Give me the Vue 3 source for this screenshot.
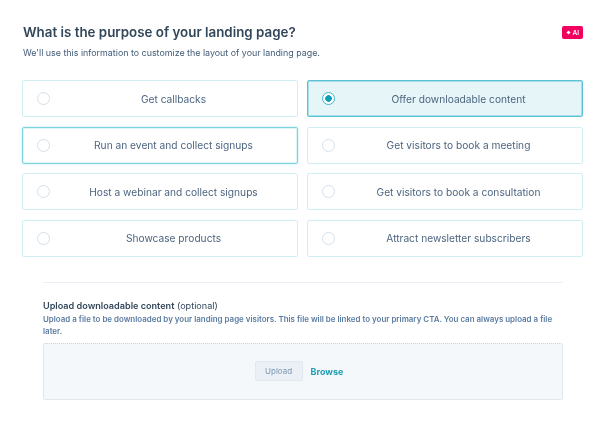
<template>
  <div class="page">
    <div class="header">
      <h1 class="title">What is the purpose of your landing page?</h1>
      <span class="ai-badge"><i class="spark" />AI</span>
    </div>
    <p class="subtitle">We'll use this information to customize the layout of your landing page.</p>

    <div class="options">
      <div
        v-for="opt in options"
        :key="opt.label"
        class="option"
        :class="{ selected: opt.label === selected, hovered: opt.hovered }"
      >
        <span class="radio" />
        <span class="option-label">{{ opt.label }}</span>
      </div>
    </div>

    <div class="upload-section">
      <div class="upload-title"><b>Upload downloadable content</b> (optional)</div>
      <p class="upload-help">
        Upload a file to be downloaded by your landing page visitors. This file will be linked to your primary CTA. You can always upload a file later.
      </p>
      <div class="dropzone">
        <button class="upload-btn">Upload</button>
        <a class="browse">Browse</a>
      </div>
    </div>
  </div>
</template>

<script setup>
const selected = 'Offer downloadable content'

const options = [
  { label: 'Get callbacks' },
  { label: 'Offer downloadable content' },
  { label: 'Run an event and collect signups', hovered: true },
  { label: 'Get visitors to book a meeting' },
  { label: 'Host a webinar and collect signups' },
  { label: 'Get visitors to book a consultation' },
  { label: 'Showcase products' },
  { label: 'Attract newsletter subscribers' }
]
</script>

<style>
html, body {
  background: #fff;
}
</style>

<style scoped>
.page {
  width: 605px;
  height: 428px;
  box-sizing: border-box;
  padding: 23px 22px 0;
  font-family: Inter, "Noto Sans", sans-serif;
  color: #33475b;
  overflow: hidden;
  /* the reference is a slightly soft, upscaled capture */
  filter: blur(0.35px);
}

.header {
  display: flex;
  justify-content: space-between;
  align-items: center;
  padding-left: 1px;
}

.title {
  margin: 0;
  font-size: 13.35px;
  line-height: 18px;
  font-weight: 600;
}

.ai-badge {
  display: flex;
  align-items: center;
  gap: 2px;
  height: 13px;
  padding: 0 4px 0 5px;
  margin-top: 1px;
  border-radius: 2px;
  background: #f2005e;
  color: #fff;
  font-size: 6.5px;
  font-weight: 600;
}

.spark {
  width: 3px;
  height: 3px;
  background: #fff;
  transform: rotate(45deg);
}

.subtitle {
  margin: 5px 0 0 1px;
  font-size: 8.9px;
  line-height: 14px;
  color: #425b76;
}

.options {
  display: grid;
  grid-template-columns: 276px 276px;
  grid-auto-rows: 37px;
  column-gap: 9px;
  row-gap: 9.67px;
  margin-top: 20px;
}

.option {
  display: flex;
  align-items: center;
  box-sizing: border-box;
  padding-left: 14px;
  border: 1px solid #cfeff4;
  border-radius: 2px;
  background: #fff;
}

.option.hovered {
  border-color: #7fd3df;
  box-shadow: 0 0 3px rgba(127, 211, 223, 0.5), inset 0 0 0 1px rgba(127, 211, 223, 0.25);
}

.option.selected {
  border-color: #5cc3d4;
  background: #e5f5f8;
  box-shadow: inset 0 0 0 1px rgba(92, 195, 212, 0.45);
}

.radio {
  flex: none;
  box-sizing: border-box;
  width: 13px;
  height: 13px;
  border: 1px solid #d5dfe9;
  border-radius: 50%;
  background: #fff;
}

.selected .radio {
  border: 1.5px solid #3fb8cc;
  background: radial-gradient(circle, #0f9fb8 0 3px, #fff 3.5px);
}

.option-label {
  flex: 1;
  text-align: center;
  font-size: 10.2px;
  color: #4d6580;
}

.upload-section {
  margin: 25px 20px 0 21px;
  padding-top: 16px;
  border-top: 1px solid #eaf0f6;
}

.upload-title {
  font-size: 9.1px;
  line-height: 13px;
}

.upload-title b {
  font-weight: 600;
}

.upload-help {
  margin: 1px 0 0;
  font-size: 7.95px;
  line-height: 12px;
  font-weight: 600;
  color: #5a7ba0;
}

.dropzone {
  display: flex;
  justify-content: center;
  align-items: center;
  gap: 8px;
  box-sizing: border-box;
  height: 57px;
  margin-top: 6px;
  padding-right: 8px;
  border: 1px dotted #cbd6e2;
  border-radius: 2px;
  background: #f5f8fa;
}

.upload-btn {
  width: 48px;
  height: 20px;
  padding: 0;
  border: 1px solid #e1e8f0;
  border-radius: 2px;
  background: #eaf0f6;
  font-family: inherit;
  font-size: 8px;
  color: #7c98b6;
}

.browse {
  font-size: 9px;
  font-weight: 700;
  color: #1f9fb5;
}
</style>
